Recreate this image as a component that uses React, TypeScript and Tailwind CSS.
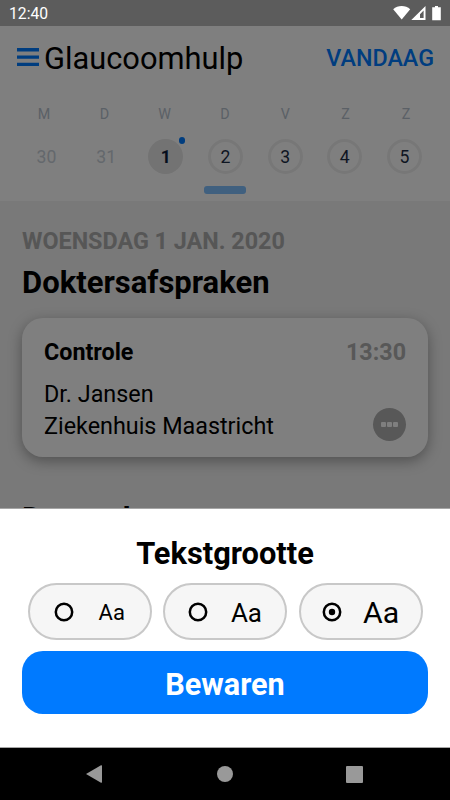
import clsx from "clsx";

type Day = {
  label: string;
  date: number;
  state: "disabled" | "selected" | "default";
};

const days: Day[] = [
  { label: "M", date: 30, state: "disabled" },
  { label: "D", date: 31, state: "disabled" },
  { label: "W", date: 1, state: "selected" },
  { label: "D", date: 2, state: "default" },
  { label: "V", date: 3, state: "default" },
  { label: "Z", date: 4, state: "default" },
  { label: "Z", date: 5, state: "default" },
];

const sizes = [
  { id: "small", className: "text-[22px] pt-[2px]", checked: false },
  { id: "medium", className: "text-[26px] pt-[2px]", checked: false },
  { id: "large", className: "text-[30.3px] pt-[4px]", checked: true },
];

const StatusBar = () => (
  <div className="flex h-[26px] items-center justify-between bg-[#5c5c5c] pl-[9px] pr-[8px] text-white">
    <span className="pt-[2px] text-[15.7px] leading-none">12:40</span>
    <svg width="50" height="26" viewBox="0 0 50 26" fill="#fff">
      <path d="M1.2 9.2C5.8 4.9 13.6 4.9 18.2 9.2L9.7 19.4Z" />
      <path fillRule="evenodd" d="M33.5 6v14H19.3ZM28 14.2V18h3.6v-7.4Z" />
      <path d="M43 6h3v1.3h2.8v12.9h-8.6V7.3H43Z" />
    </svg>
  </div>
);

const Header = () => (
  <div className="flex h-[64px] items-center justify-between pl-[17px] pr-[16px]">
    <div className="flex items-center gap-[5px]">
      <svg width="22" height="18" viewBox="0 0 22 18" fill="#007aff" className="-mt-[2px]">
        <path d="M0 0h22v3.5H0zM0 7.5h22v3.3H0zM0 14.8h22v3.2H0z" />
      </svg>
      <h1 className="pt-[2px] text-[30.8px] leading-[32px]">Glaucoomhulp</h1>
    </div>
    <button className="text-[23.3px] font-medium leading-[24px] text-[#007aff]">
      VANDAAG
    </button>
  </div>
);

const WeekCalendar = () => (
  <div className="h-[111px] pt-[16px]">
    <div className="flex justify-between px-[29px]">
      {days.map((day, i) => (
        <span key={i} className="w-[30px] text-center text-[14.3px] leading-[16px] text-[#b6c1cd]">
          {day.label}
        </span>
      ))}
    </div>
    <div className="mt-[17px] flex justify-between pl-[29px] pr-[28px]">
      {days.map((day) => (
        <div
          key={day.date}
          className={clsx(
            "relative flex h-[35px] w-[35px] items-center justify-center rounded-full pt-[1px] text-[17.6px]",
            day.state === "disabled" && "text-[#c8d0d9]",
            day.state === "selected" && "bg-[#e6e6e6] font-bold text-[#0a1c3a]",
            day.state === "default" && "border-[3px] border-[#efefef] text-[#1c2d45]"
          )}
        >
          {day.date}
          {day.state === "selected" && (
            <span className="absolute -right-[2px] -top-[2px] h-[6.5px] w-[6.5px] rounded-full bg-[#007aff]" />
          )}
        </div>
      ))}
    </div>
    <div className="mx-auto mt-[12px] h-[8px] w-[42px] rounded-[3px] bg-[#80c0ff]" />
  </div>
);

const AppointmentCard = () => (
  <div className="mt-[17px] flex h-[139px] flex-col rounded-[21px] bg-white px-[22px] pt-[19px] shadow-[0_4px_14px_rgba(0,0,0,0.34)]">
    <div className="flex justify-between text-[23.3px] font-bold leading-[30px]">
      <span>Controle</span>
      <span className="text-[#b0b0b0]">13:30</span>
    </div>
    <div className="mt-[11px] flex items-end justify-between text-[23.35px] leading-[32px]">
      <div>
        <p>Dr. Jansen</p>
        <p>Ziekenhuis Maastricht</p>
      </div>
      <button className="mb-[1px] flex h-[33px] w-[33px] items-center justify-center gap-[1px] rounded-full bg-[#b0b0b0]">
        <span className="h-[5px] w-[5px] rounded-[1px] bg-white" />
        <span className="h-[5px] w-[5px] rounded-[1px] bg-white" />
        <span className="h-[5px] w-[5px] rounded-[1px] bg-white" />
      </button>
    </div>
  </div>
);

const TextSizeSheet = () => (
  <div className="h-[240px] border-y border-[#a6a6a6] bg-white px-[22px] pt-[27px]">
    <h2 className="text-center text-[30.8px] font-bold leading-[36px]">Tekstgrootte</h2>
    <div className="mt-[11px] flex justify-between px-[5.5px]">
      {sizes.map((size) => (
        <button
          key={size.id}
          className="flex h-[57px] w-[124px] items-center justify-evenly rounded-full border-2 border-[#c8c8c8] bg-[#f6f6f6]"
        >
          <svg width="20" height="20" viewBox="0 0 20 20">
            <circle cx="10" cy="10" r="8.2" fill="none" stroke="#000" strokeWidth="2.5" />
            {size.checked && <circle cx="10" cy="10" r="3.2" />}
          </svg>
          <span className={clsx("leading-none", size.className)}>Aa</span>
        </button>
      ))}
    </div>
    <button className="mt-[11px] h-[63px] w-full rounded-[21px] bg-[#007aff] pt-[5px] text-[30.6px] font-bold text-white">
      Bewaren
    </button>
  </div>
);

const NavigationBar = () => (
  <div className="flex h-[52px] items-center justify-between bg-black pl-[86px] pr-[87px]">
    <svg width="16" height="18" viewBox="0 0 16 18" fill="#999">
      <path d="M0 9 15 0.3q1-.5 1 .6v16.2q0 1.1-1 .6Z" />
    </svg>
    <span className="ml-[1px] h-[16px] w-[16px] rounded-full bg-[#999]" />
    <span className="h-[17px] w-[17px] rounded-[1px] bg-[#999]" />
  </div>
);

const App = () => {
  return (
    <div className="h-[800px] w-[450px] overflow-hidden bg-white font-['Roboto',sans-serif] text-black">
      <StatusBar />
      <div className="relative h-[482px] overflow-hidden bg-[#f2f2f2]">
        <div className="bg-white">
          <Header />
          <WeekCalendar />
        </div>
        <div className="px-[22px] pt-[25px]">
          <p className="text-[23.35px] font-bold leading-[30px] text-[#acacac]">
            WOENSDAG 1 JAN. 2020
          </p>
          <h2 className="mt-[9px] text-[31px] font-bold leading-[36px]">Doktersafspraken</h2>
          <AppointmentCard />
          <h2 className="mt-[44px] text-[31px] font-bold leading-[36px]">Druppels</h2>
        </div>
        <div className="absolute inset-0 bg-black/50" />
      </div>
      <TextSizeSheet />
      <NavigationBar />
    </div>
  );
};

export default App;
